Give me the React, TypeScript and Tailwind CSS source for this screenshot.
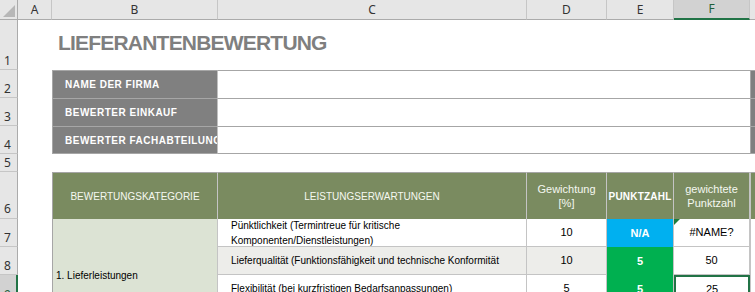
export default function App() {
  const colHdr =
    "bg-[#e6e6e6] border-r border-b border-r-[#c6c6c6] border-b-[#ababab] flex items-center justify-center text-[12px] text-[#333]";
  const rowHdr =
    "bg-[#e6e6e6] border-r border-b border-r-[#ababab] border-b-[#c6c6c6] flex items-end pl-[4px] pb-[0px] text-[12px] leading-[16px] text-[#333]";
  const label =
    "bg-[#808080] border-t border-t-[#a6a6a6] border-r border-r-[#c0c0c0] flex items-center pl-[12px] text-white font-bold text-[10px] tracking-[0.5px] whitespace-nowrap overflow-hidden";
  const valueCell = "bg-white border-t border-t-[#a6a6a6]";
  const grayG = "bg-[#7f7f7f] border-t border-l border-t-[#a6a6a6] border-l-[#a6a6a6]";
  const hdr =
    "bg-[#7a8b60] border-t border-t-[#a6a6a6] border-r border-r-[#c4c4c4] flex items-center justify-center text-center text-[#f5f8f0]";
  const ui = { fontFamily: '"Noto Sans", "Liberation Sans", sans-serif' };
  const body = { fontFamily: '"Liberation Sans", Arial, sans-serif' };

  return (
    <div className="w-[755px] h-[292px] overflow-hidden bg-white" style={body}>
      <div className="grid grid-cols-[18px_34px_166px_309px_80px_67px_76px_5px] grid-rows-[20px_50px_28px_28px_28px_18px_47px_28px_28px_28px]">
        {/* Column header row */}
        <div className="bg-[#e6e6e6] border-r border-b border-r-[#ababab] border-b-[#ababab] relative">
          <svg className="absolute right-[2px] bottom-[2px]" width="12" height="12" viewBox="0 0 12 12">
            <polygon points="12,0 12,12 0,12" fill="#b7b7b7" />
          </svg>
        </div>
        <div className={colHdr} style={ui}>A</div>
        <div className={colHdr} style={ui}>B</div>
        <div className={colHdr} style={ui}>C</div>
        <div className={colHdr} style={ui}>D</div>
        <div className={colHdr} style={ui}>E</div>
        <div
          className="bg-[#d2d2d2] border-r border-r-[#c6c6c6] border-b-2 border-b-[#217346] flex items-center justify-center text-[12px] text-[#1f5f3a]"
          style={ui}
        >
          F
        </div>
        <div className="bg-[#e6e6e6] border-b border-b-[#ababab]" />

        {/* Row 1 */}
        <div className={rowHdr} style={ui}>1</div>
        <div />
        <div className="col-span-6 pl-[6px] pt-[11px]">
          <span className="text-[21px] leading-[24px] font-bold tracking-[-0.8px] text-[#7f7f7f] whitespace-nowrap">
            LIEFERANTENBEWERTUNG
          </span>
        </div>

        {/* Row 2 */}
        <div className={rowHdr} style={ui}>2</div>
        <div />
        <div className={label + " border-l border-l-[#a6a6a6]"}>NAME DER FIRMA</div>
        <div className={"col-span-4 " + valueCell} />
        <div className={grayG} />

        {/* Row 3 */}
        <div className={rowHdr} style={ui}>3</div>
        <div />
        <div className={label + " border-l border-l-[#a6a6a6]"}>BEWERTER EINKAUF</div>
        <div className={"col-span-4 " + valueCell} />
        <div className={grayG} />

        {/* Row 4 */}
        <div className={rowHdr} style={ui}>4</div>
        <div />
        <div className={label + " border-l border-l-[#a6a6a6] border-b border-b-[#a6a6a6]"}>
          BEWERTER FACHABTEILUNG
        </div>
        <div className={"col-span-4 border-b border-b-[#a6a6a6] " + valueCell} />
        <div className={grayG + " border-b border-b-[#a6a6a6]"} />

        {/* Row 5 */}
        <div className={rowHdr} style={ui}>5</div>
        <div className="col-span-7" />

        {/* Row 6 */}
        <div className={rowHdr + " pb-[1px]"} style={ui}>6</div>
        <div />
        <div className={hdr + " border-l border-l-[#a6a6a6] text-[10px]"}>BEWERTUNGSKATEGORIE</div>
        <div className={hdr + " text-[10px]"}>LEISTUNGSERWARTUNGEN</div>
        <div className={hdr + " text-[11px] leading-[14px]"}>
          Gewichtung
          <br />
          [%]
        </div>
        <div className={hdr + " text-[10px] font-bold tracking-[0.2px] text-white"}>PUNKTZAHL</div>
        <div className={hdr + " text-[11px] leading-[14px]"}>
          gewichtete
          <br />
          Punktzahl
        </div>
        <div className="bg-[#7a8b60] border-t border-t-[#a6a6a6] border-l border-l-[#c4c4c4]" />

        {/* Row 7 */}
        <div className={rowHdr} style={ui}>7</div>
        <div />
        <div className="row-span-3 bg-[#dce3d4] border-l border-l-[#a6a6a6] border-r border-r-[#c4c4c4] pl-[3px] pt-[50px] text-[10px] leading-[14px] text-black">
          1. Lieferleistungen
        </div>
        <div className="bg-white border-r border-b border-r-[#c4c4c4] border-b-[#c4c4c4] pl-[13px] text-[10px] leading-[15px] text-black flex flex-col justify-center">
          <span>Pünktlichkeit (Termintreue für kritische</span>
          <span>Komponenten/Dienstleistungen)</span>
        </div>
        <div className="bg-white border-r border-b border-r-[#c4c4c4] border-b-[#c4c4c4] flex items-center justify-center text-[11px] text-black">
          10
        </div>
        <div className="bg-[#00b0f0] border-r border-r-[#c4c4c4] flex items-center justify-center text-[11px] font-bold text-white">
          N/A
        </div>
        <div className="relative bg-white border-r border-b border-r-[#c4c4c4] border-b-[#c4c4c4] flex items-center justify-center text-[11px] text-black">
          <svg className="absolute left-0 top-0" width="6" height="6" viewBox="0 0 6 6">
            <polygon points="0,0 6,0 0,6" fill="#1e7b3d" />
          </svg>
          #NAME?
        </div>
        <div className="bg-white border-l border-l-[#c4c4c4]" />

        {/* Row 8 */}
        <div className={rowHdr} style={ui}>8</div>
        <div />
        <div className="bg-[#ededea] border-r border-b border-r-[#c4c4c4] border-b-[#c4c4c4] pl-[13px] flex items-center text-[10px] text-black whitespace-nowrap">
          Lieferqualität (Funktionsfähigkeit und technische Konformität
        </div>
        <div className="bg-[#ededea] border-r border-b border-r-[#c4c4c4] border-b-[#c4c4c4] flex items-center justify-center text-[11px] text-black">
          10
        </div>
        <div className="bg-[#00b050] border-r border-r-[#c4c4c4] flex items-center justify-center text-[11px] font-bold text-white">
          5
        </div>
        <div className="bg-white border-r border-b border-r-[#c4c4c4] border-b-[#c4c4c4] flex items-center justify-center text-[11px] text-black">
          50
        </div>
        <div className="bg-white border-l border-l-[#c4c4c4]" />

        {/* Row 9 */}
        <div
          className="bg-[#d2d2d2] border-r-2 border-r-[#217346] flex items-end pl-[4px] text-[12px] leading-[16px] text-[#1f5f3a]"
          style={ui}
        >
          9
        </div>
        <div />
        <div className="bg-white border-r border-b border-r-[#c4c4c4] border-b-[#c4c4c4] pl-[13px] flex items-center text-[10px] text-black whitespace-nowrap">
          Flexibilität (bei kurzfristigen Bedarfsanpassungen)
        </div>
        <div className="bg-white border-r border-b border-r-[#c4c4c4] border-b-[#c4c4c4] flex items-center justify-center text-[11px] text-black">
          5
        </div>
        <div className="bg-[#00b050] border-r border-r-[#c4c4c4] flex items-center justify-center text-[11px] font-bold text-white">
          5
        </div>
        <div className="bg-white border-2 border-[#217346] flex items-center justify-center text-[11px] text-black">
          25
        </div>
        <div className="bg-white border-l border-l-[#c4c4c4]" />
      </div>
    </div>
  );
}
